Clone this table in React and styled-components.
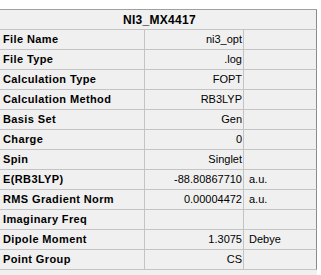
import React from "react";
import styled, { createGlobalStyle } from "styled-components";

const Global = createGlobalStyle`
  html, body {
    margin: 0;
    padding: 0;
    background: #ffffff;
  }
  body {
    font-family: "Liberation Sans", Arial, sans-serif;
  }
`;

const Page = styled.div`
  width: 321px;
  height: 275px;
  padding-top: 9px;
  box-sizing: border-box;
  background: #ffffff;
`;

const Panel = styled.div`
  width: 317px;
  height: 266px;
  background: #f0f0f0;
  border-top: 1px solid #a0a0a0;
  box-sizing: border-box;
  display: flex;
  flex-direction: column;
`;

const Header = styled.div`
  height: 20px;
  box-sizing: border-box;
  border-bottom: 1px solid #c4c4c4;
  border-right: 1px solid #8a8a8a;
  display: flex;
  align-items: center;
  justify-content: center;
  font-size: 12px;
  font-weight: bold;
  letter-spacing: 0.3px;
  color: #000;
  padding-left: 3px;
`;

const Grid = styled.div`
  display: grid;
  grid-template-columns: 145px 99px 73px;
  grid-auto-rows: 20px;
`;

const Cell = styled.div`
  box-sizing: border-box;
  border-bottom: 1px solid #c4c4c4;
  border-right: 1px solid ${(p) => (p.$edge ? "#8a8a8a" : "#c4c4c4")};
  display: flex;
  align-items: center;
  font-size: 11px;
  color: #000;
  white-space: nowrap;
  overflow: hidden;
  padding-bottom: 1px;
`;

const Label = styled(Cell)`
  font-weight: bold;
  letter-spacing: 0.38px;
  padding-left: 3px;
`;

const Value = styled(Cell)`
  justify-content: flex-end;
  padding-right: 1px;
`;

const Unit = styled(Cell)`
  padding-left: 5px;
`;

const rows = [
  ["File Name", "ni3_opt", ""],
  ["File Type", ".log", ""],
  ["Calculation Type", "FOPT", ""],
  ["Calculation Method", "RB3LYP", ""],
  ["Basis Set", "Gen", ""],
  ["Charge", "0", ""],
  ["Spin", "Singlet", ""],
  ["E(RB3LYP)", "-88.80867710", "a.u."],
  ["RMS Gradient Norm", "0.00004472", "a.u."],
  ["Imaginary Freq", "", ""],
  ["Dipole Moment", "1.3075", "Debye"],
  ["Point Group", "CS", ""],
];

export default function App() {
  return (
    <>
      <Global />
      <Page>
        <Panel>
          <Header>NI3_MX4417</Header>
          <Grid>
            {rows.map(([label, value, unit]) => (
              <React.Fragment key={label}>
                <Label>{label}</Label>
                <Value>{value}</Value>
                <Unit $edge>{unit}</Unit>
              </React.Fragment>
            ))}
          </Grid>
        </Panel>
      </Page>
    </>
  );
}
